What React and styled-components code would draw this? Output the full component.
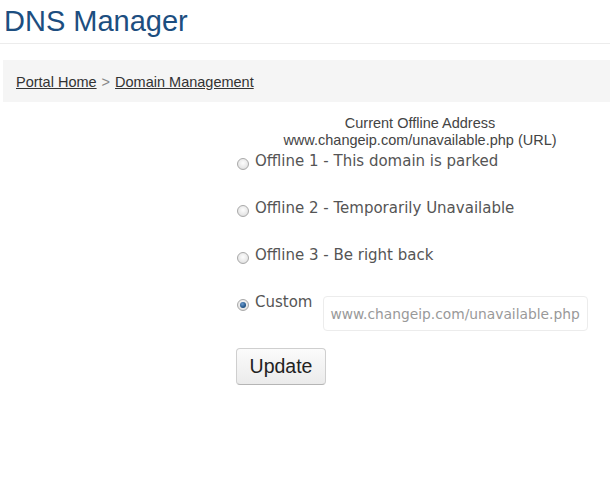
import React, {useState} from 'react';
import styled, {createGlobalStyle} from 'styled-components';

const OPTIONS = [
  {id: 'offline1', label: 'Offline 1 - This domain is parked'},
  {id: 'offline2', label: 'Offline 2 - Temporarily Unavailable'},
  {id: 'offline3', label: 'Offline 3 - Be right back'},
];

const GlobalStyle = createGlobalStyle`
  html, body {
    margin: 0;
    padding: 0;
    background: #fff;
  }
  body {
    font-family: "Liberation Sans", Arial, sans-serif;
    color: #333;
  }
`;

const App = () => {
  const [selected, setSelected] = useState('custom');

  return (
    <StyledPage>
      <GlobalStyle />
      <StyledTitle>DNS Manager</StyledTitle>

      <StyledBreadcrumb>
        <StyledCrumb href="#">Portal Home</StyledCrumb>
        <StyledSeparator>&gt;</StyledSeparator>
        <StyledCrumb href="#">Domain Management</StyledCrumb>
      </StyledBreadcrumb>

      <StyledContent>
        <StyledForm>
          <StyledCurrent>
            Current Offline Address
            <br />
            www.changeip.com/unavailable.php (URL)
          </StyledCurrent>

          {OPTIONS.map(option => (
            <StyledOption key={option.id}>
              <StyledRadio
                type="radio"
                name="offline"
                checked={selected === option.id}
                onChange={() => setSelected(option.id)}
              />
              <StyledLabel>{option.label}</StyledLabel>
            </StyledOption>
          ))}

          <StyledOption>
            <StyledRadio
              type="radio"
              name="offline"
              checked={selected === 'custom'}
              onChange={() => setSelected('custom')}
            />
            <StyledLabel>Custom</StyledLabel>
            <StyledInput placeholder="www.changeip.com/unavailable.php" />
          </StyledOption>

          <StyledButton type="button">Update</StyledButton>
        </StyledForm>
      </StyledContent>
    </StyledPage>
  );
};

export default App;

/******************************************************************
** Styled Components
*/
const StyledPage = styled.div`
  width: 610px;
  min-height: 491px;
`;

const StyledTitle = styled.h1`
  margin: 0;
  padding: 3px 0 0 4px;
  height: 40px;
  font-family: "Liberation Sans", Arial, sans-serif;
  font-weight: normal;
  font-size: 29px;
  line-height: 36px;
  color: #1c4e80;
  border-bottom: 1px solid #ececec;
`;

const StyledBreadcrumb = styled.div`
  margin: 16px 0 0 3px;
  height: 42px;
  padding: 2px 13px 0;
  box-sizing: border-box;
  display: flex;
  align-items: center;
  gap: 5px;
  background: #f5f5f5;
  font-size: 14.5px;
`;

const StyledCrumb = styled.a`
  color: #333;
  text-decoration: underline;
`;

const StyledSeparator = styled.span`
  color: #888;
`;

const StyledContent = styled.div`
  display: grid;
  grid-template-columns: 236px 368px;
  padding-top: 13px;
`;

const StyledForm = styled.div`
  grid-column: 2;
  display: flex;
  flex-direction: column;
  align-items: flex-start;
`;

const StyledCurrent = styled.div`
  align-self: stretch;
  margin-bottom: 2px;
  text-align: center;
  font-size: 14.5px;
  line-height: 17px;
  color: #444;
`;

const StyledOption = styled.label`
  display: flex;
  align-items: flex-start;
  height: 47px;
`;

const StyledRadio = styled.input`
  appearance: none;
  margin: 7px 6px 0 1px;
  width: 12px;
  height: 12px;
  border-radius: 50%;
  border: 1px solid #a9a9a9;
  background: radial-gradient(circle at 50% 40%, #fdfdfd 0%, #e8e8e8 60%, #d2d2d2 100%);
  box-sizing: border-box;
  position: relative;

  &:checked::after {
    content: '';
    position: absolute;
    left: 2px;
    top: 2px;
    width: 6px;
    height: 6px;
    border-radius: 50%;
    background: radial-gradient(circle at 40% 35%, #6a9bd0 0%, #1c4e80 70%);
  }
`;

const StyledLabel = styled.span`
  font-family: "DejaVu Sans", Verdana, sans-serif;
  font-size: 15px;
  line-height: 20px;
  color: #555;
`;

const StyledInput = styled.input`
  margin: 4px 0 0 11px;
  width: 265px;
  height: 35px;
  box-sizing: border-box;
  padding: 0 6px;
  border: 1px solid #ececec;
  border-radius: 4px;
  font-family: "DejaVu Sans", Verdana, sans-serif;
  font-size: 13.8px;
  color: #555;
  outline: none;

  &::placeholder {
    color: #999;
  }
`;

const StyledButton = styled.button`
  margin-top: 9px;
  width: 90px;
  height: 37px;
  border: 1px solid #cfcfcf;
  border-bottom-color: #b5b5b5;
  border-radius: 4px;
  background: linear-gradient(#fbfbfb, #ebebeb);
  font-family: "Liberation Sans", Arial, sans-serif;
  font-size: 19.5px;
  color: #222;
  cursor: pointer;
`;
